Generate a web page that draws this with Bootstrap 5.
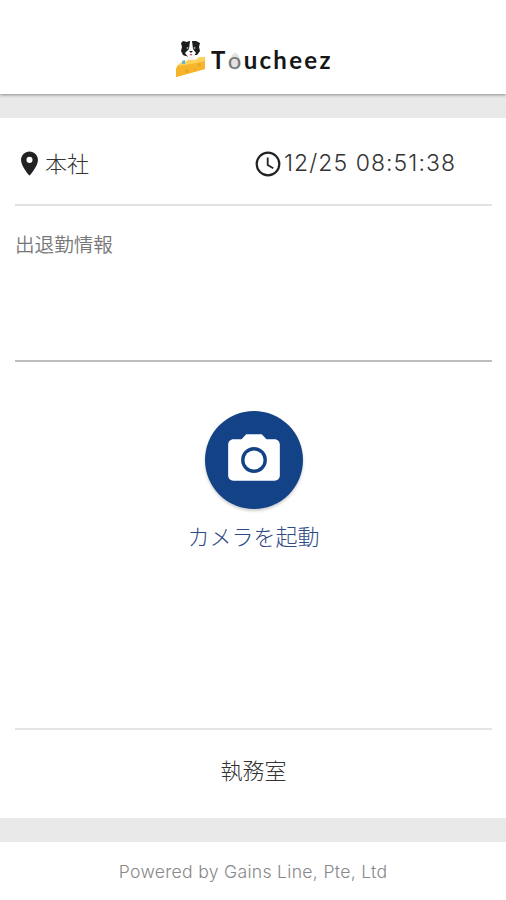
<!DOCTYPE html>
<html lang="ja">
<head>
<meta charset="utf-8">
<meta name="viewport" content="width=device-width, initial-scale=1">
<title>Toucheez</title>
<link href="https://cdn.jsdelivr.net/npm/bootstrap@5.3.0/dist/css/bootstrap.min.css" rel="stylesheet">
<style>
body{font-family:"Noto Sans CJK JP","Liberation Sans",sans-serif;font-weight:300;background:#e9e9e9;color:#333;height:900px;line-height:1}
.app-head{height:94px;padding:38px 0 0 175px;box-shadow:0 1px 3px rgba(0,0,0,.4);margin-bottom:24px}
.brand{font:700 24px/36px Lato,sans-serif;letter-spacing:2.3px;color:#161616;margin-left:6px;padding-top:4px}
.brand-o{font-weight:400;color:#777;background:radial-gradient(ellipse at 45% 56%,#e2e2e2 0 4px,transparent 5px)}
.panel{height:700px;padding:0 14px 0 15px}
.status{height:88px;border-bottom:2px solid #e2e2e2;font-size:22px;padding-top:5px}
.place{width:240px}
.place span{padding-bottom:4px;margin-left:1px}
.time{font-family:Inter,sans-serif;font-size:23px;letter-spacing:1.05px;margin-left:3px}
.info{height:156px;border-bottom:2px solid #bdbdbd;font-size:19.6px;color:#777;font-weight:350;padding-top:28px}
.capture{height:368px;padding-top:49px;color:#304b84;font-size:22px;border-bottom:2px solid #e5e5e5}
.cam{width:98px;height:98px;background:#134386;box-shadow:0 2px 3px rgba(0,0,0,.2);margin-bottom:15px}
.room{height:83px;font-size:22px;padding-bottom:6px}
.foot{height:58px;margin-top:24px;padding-top:2px;font-family:Inter,sans-serif;font-size:17.6px;letter-spacing:.3px;color:#888}
</style>
</head>
<body>
<header class="app-head bg-white d-flex align-items-start">
<svg width="30" height="40" viewBox="0 0 30 40">
<path d="M2 28 11 21 30 19V31L1 39Z" fill="#f7b931"/><path d="M2 28 11 21 30 19 29 24Z" fill="#ffd35a"/>
<path d="M1 30 30 23V31L1 39Z" fill="#f6b52b"/><circle cx="12" cy="33" r="2" fill="#eba72a"/><circle cx="24" cy="27" r="1.7" fill="#eba72a"/><circle cx="20" cy="31.500" r="1" fill="#eba72a"/>
<path d="M8 18q7-5 14 0l-1 4H9Z" fill="#f1f1f1"/>
<path d="M6 5 8 3 12 4 14 3H17L21 3 25 5 24 9 25 13 22 17 18 19H13L8 17 6 13 7 9Z" fill="#1e1e1e"/>
<path d="M15 3h2l1 8 3 4-3 4h-5l-3-4 4-4Z" fill="#fff"/><circle cx="12.500" cy="10" r="1" fill="#aaa"/><circle cx="19.500" cy="10" r="1" fill="#aaa"/>
<path d="M14 13h4l-2 2Z" fill="#222"/><path d="M14.500 16h3l-1.500 2Z" fill="#e84b61"/>
<rect x="8" y="18" width="5" height="5" rx="2.500" fill="#fff"/><rect x="18" y="17" width="5" height="4" rx="2" fill="#fff"/><path d="m7 23 3-1v4H7Z" fill="#68b5d6"/>
</svg>
<div class="brand">T<span class="brand-o">o</span>ucheez</div>
</header>
<main class="panel bg-white">
<div class="status d-flex align-items-center">
<div class="place d-flex align-items-center"><svg width="29" height="29" viewBox="0 0 24 24" fill="#222"><path d="M12 2C8.130 2 5 5.130 5 9c0 5.250 7 13 7 13s7-7.750 7-13c0-3.870-3.130-7-7-7zm0 9.500a2.500 2.500 0 1 1 0-5 2.500 2.500 0 0 1 0 5z"/></svg><span>本社</span></div>
<svg width="26" height="26" viewBox="0 0 26 26" fill="none" stroke="#222" stroke-width="2.200"><circle cx="13" cy="13" r="11.300"/><path d="M12.700 6.500V14l5.500 3.300" stroke-width="1.800"/></svg><span class="time">12/25 08:51:38</span>
</div>
<div class="info">出退勤情報</div>
<div class="capture d-flex flex-column align-items-center">
<div class="cam rounded-circle d-flex align-items-center justify-content-center flex-shrink-0"><svg width="62" height="62" viewBox="0 0 24 24" fill="#fff"><path fill-rule="evenodd" d="M9 2 7.170 4H4c-1.100 0-2 .9-2 2v12c0 1.100.9 2 2 2h16c1.100 0 2-.9 2-2V6c0-1.100-.9-2-2-2h-3.170L15 2H9zm3 15a5 5 0 1 1 0-10 5 5 0 0 1 0 10z"/><circle cx="12" cy="12" r="3.700"/></svg></div>
<span>カメラを起動</span>
</div>
<div class="room d-flex align-items-center justify-content-center">執務室</div>
</main>
<footer class="foot bg-white d-flex align-items-center justify-content-center"><span>Powered by Gains Line, Pte, Ltd</span></footer>
<script src="https://cdn.jsdelivr.net/npm/bootstrap@5.3.0/dist/js/bootstrap.bundle.min.js"></script>
</body>
</html>
